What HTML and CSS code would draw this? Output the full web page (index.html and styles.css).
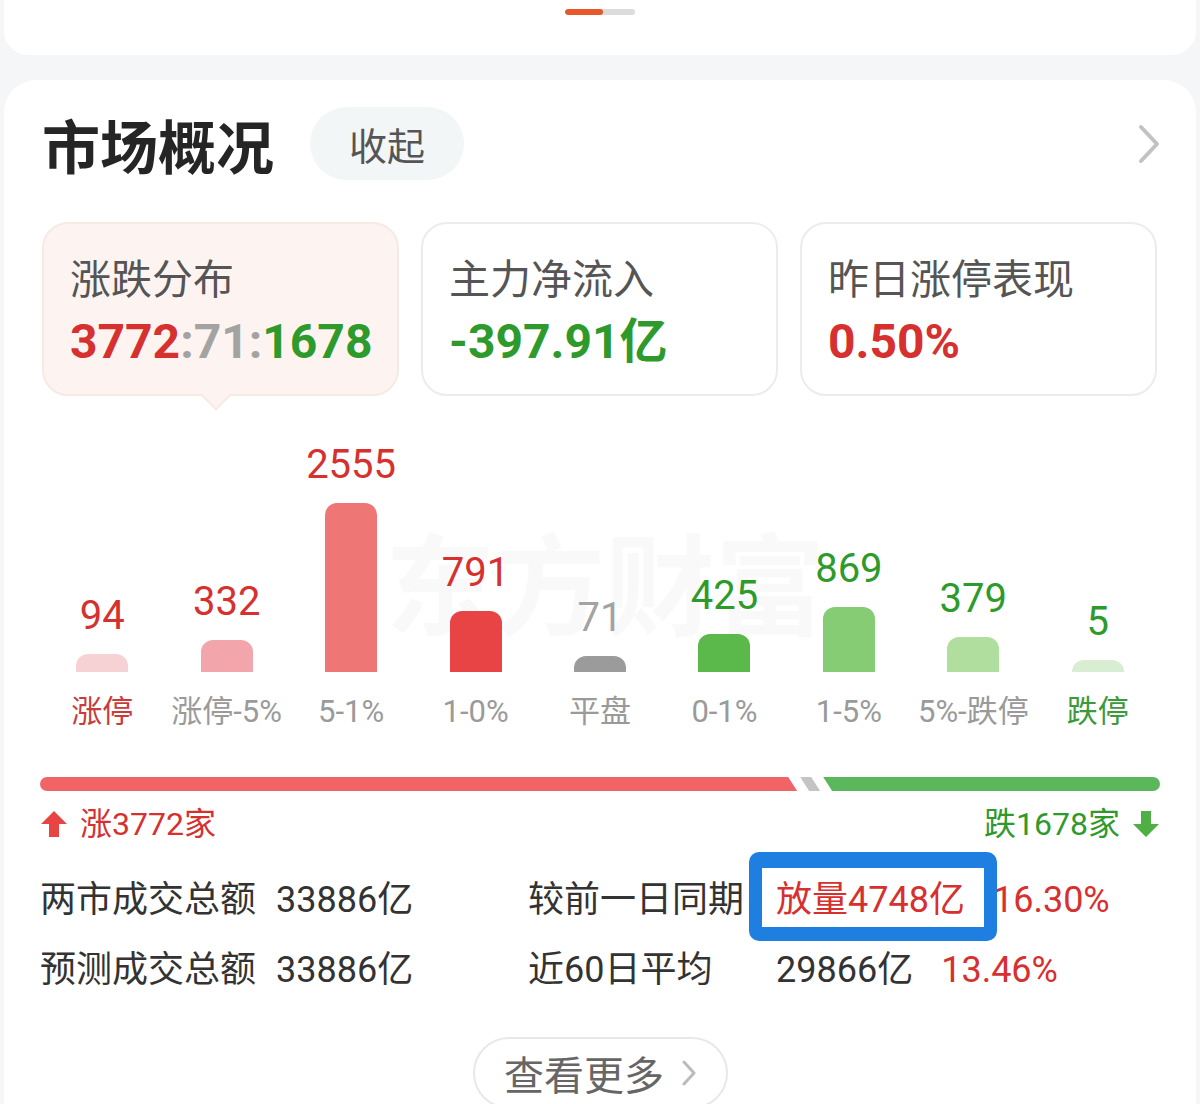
FILE: index.html
```html
<!DOCTYPE html>
<html lang="zh-CN">
<head>
  <meta charset="UTF-8" />
  <title>市场概况</title>
  <meta name="viewport" content="width=device-width, initial-scale=1.0" />
  <link rel="stylesheet" href="styles.css">
</head>
<body>

  <div class="top-card">
    <div class="pager"><span class="pager-on"></span></div>
  </div>

  <div class="panel">
    <div class="panel-head">
      <h1>市场概况</h1>
      <button class="fold">收起</button>
      <svg class="go" viewBox="0 0 22 40"><path d="M3 3 L19 20 L3 37"/></svg>
    </div>

    <div class="tabs">
      <div class="tab active">
        <div class="tab-name">涨跌分布</div>
        <div class="tab-value"><span class="up">3772</span><span class="flat">:71:</span><span class="down">1678</span></div>
      </div>
      <div class="tab">
        <div class="tab-name">主力净流入</div>
        <div class="tab-value down">-397.91亿</div>
      </div>
      <div class="tab">
        <div class="tab-name">昨日涨停表现</div>
        <div class="tab-value up">0.50%</div>
      </div>
    </div>

    <!-- 柱高 = 12 + 家数 * 0.0615 -->
    <div class="chart">
      <div class="watermark">东方财富</div>
      <div class="col"><span class="num up">94</span><div class="bar b1" style="height:18px"></div></div>
      <div class="col"><span class="num up">332</span><div class="bar b2" style="height:32px"></div></div>
      <div class="col"><span class="num up">2555</span><div class="bar b3" style="height:169px"></div></div>
      <div class="col"><span class="num up">791</span><div class="bar b4" style="height:61px"></div></div>
      <div class="col"><span class="num flat">71</span><div class="bar b5" style="height:16px"></div></div>
      <div class="col"><span class="num down">425</span><div class="bar b6" style="height:38px"></div></div>
      <div class="col"><span class="num down">869</span><div class="bar b7" style="height:65px"></div></div>
      <div class="col"><span class="num down">379</span><div class="bar b8" style="height:35px"></div></div>
      <div class="col"><span class="num down">5</span><div class="bar b9" style="height:12px"></div></div>
    </div>
    <div class="labels">
      <span class="up">涨停</span>
      <span>涨停-5%</span>
      <span>5-1%</span>
      <span>1-0%</span>
      <span>平盘</span>
      <span>0-1%</span>
      <span>1-5%</span>
      <span>5%-跌停</span>
      <span class="down">跌停</span>
    </div>

    <div class="ratio">
      <div class="seg seg-up" style="flex-grow:3772"></div>
      <div class="seg seg-flat" style="flex-grow:71"></div>
      <div class="seg seg-down" style="flex-grow:1678"></div>
    </div>
    <div class="counts">
      <div class="count up">
        <svg viewBox="0 0 28 28"><path d="M14 1 L27 14 H19 V27 H9 V14 H1 Z"/></svg>
        涨3772家
      </div>
      <div class="count down">
        跌1678家
        <svg viewBox="0 0 28 28"><path d="M14 27 L27 14 H19 V1 H9 V14 H1 Z"/></svg>
      </div>
    </div>

    <div class="stats">
      <span>两市成交总额</span>
      <span>33886亿</span>
      <span>较前一日同期</span>
      <span><span class="hl up">放量4748亿</span><span class="pct up">16.30%</span></span>

      <span>预测成交总额</span>
      <span>33886亿</span>
      <span>近60日平均</span>
      <span>29866亿<span class="pct up">13.46%</span></span>
    </div>

    <div class="more">
      查看更多
      <svg viewBox="0 0 14 26"><path d="M2 2 L12 13 L2 24"/></svg>
    </div>
  </div>

</body>
</html>
```

FILE: styles.css
```css
body {
  margin: 0;
  background: #f4f6f7;
  font-family: Roboto, "Noto Sans CJK SC", sans-serif;
  color: #333;
}

.up { color: #d6302f; }
.down { color: #2f9a2c; }
.flat { color: #a3a3a3; }

/* 上一张卡片的底部 */
.top-card {
  height: 55px;
  margin: 0 4px;
  padding-top: 9px;
  box-sizing: border-box;
  background: #fff;
  border-radius: 0 0 24px 24px;
  display: flex;
  justify-content: center;
}

.pager {
  width: 70px;
  height: 6px;
  border-radius: 3px;
  background: #dcdcdc;
  overflow: hidden;
}

.pager-on {
  display: block;
  width: 38px;
  height: 100%;
  border-radius: 3px;
  background: #e8572a;
}

.panel {
  margin: 25px 4px 0;
  padding: 27px 36px 40px;
  background: #fff;
  border-radius: 32px 32px 0 0;
}

.panel-head {
  display: flex;
  align-items: center;
  height: 73px;
  padding-left: 2px;
}

h1 {
  margin: 0;
  font-family: "Noto Sans CJK SC", sans-serif;
  font-size: 58px;
  font-weight: 700;
  line-height: 1;
  color: #252525;
}

.fold {
  margin-left: 36px;
  width: 154px;
  height: 73px;
  border: none;
  border-radius: 37px;
  background: #f3f6f7;
  font-family: "Noto Sans CJK SC", sans-serif;
  font-size: 38px;
  color: #555;
}

.go {
  margin-left: auto;
  width: 22px;
  height: 40px;
  fill: none;
  stroke: #c2c2c2;
  stroke-width: 4;
  stroke-linecap: round;
  stroke-linejoin: round;
}

/* 三个指标卡 */
.tabs {
  display: grid;
  grid-template-columns: repeat(3, 1fr);
  gap: 22px;
  margin-top: 42px;
  padding: 0 3px 0 2px;
}

.tab {
  position: relative;
  height: 174px;
  box-sizing: border-box;
  padding: 28px 0 0 26px;
  border: 2px solid #ececec;
  border-radius: 26px;
  background: #fff;
}

.tab.active {
  background: #fdf4f1;
  border-color: #f7e9e4;
}

.tab.active::after {
  content: "";
  position: absolute;
  left: 161px;
  bottom: -12px;
  width: 20px;
  height: 20px;
  background: #fdf4f1;
  border-right: 2px solid #f7e9e4;
  border-bottom: 2px solid #f7e9e4;
  transform: rotate(45deg);
}

.tab-name {
  font-family: "Noto Sans CJK SC", sans-serif;
  font-size: 41px;
  line-height: 48px;
  color: #555;
}

.tab-value {
  margin-top: 14px;
  font-size: 48px;
  font-weight: 700;
  line-height: 56px;
}

/* 涨跌分布柱状图 */
.chart {
  position: relative;
  z-index: 0;
  display: grid;
  grid-template-columns: repeat(9, 1fr);
  align-items: end;
  height: 260px;
  margin-top: 16px;
}

.watermark {
  position: absolute;
  z-index: -1;
  left: 345px;
  top: 112px;
  font-family: "Noto Sans CJK SC", sans-serif;
  font-size: 110px;
  font-weight: 700;
  line-height: 1;
  color: rgba(0, 0, 0, 0.022);
  white-space: nowrap;
}

.col {
  display: flex;
  flex-direction: column;
  align-items: center;
}

.num {
  font-size: 40px;
  line-height: 40px;
  margin-bottom: 18px;
}

.bar {
  width: 52px;
  border-radius: 12px 12px 0 0;
}

.b1 { background: #f7d2d4; }
.b2 { background: #f2a6ab; }
.b3 { background: #ee7775; }
.b4 { background: #e84446; }
.b5 { background: #9b9b9b; }
.b6 { background: #5bb84a; }
.b7 { background: #86cc74; }
.b8 { background: #afde9f; }
.b9 { background: #d8edd2; }

.labels {
  display: grid;
  grid-template-columns: repeat(9, 1fr);
  margin-top: 22px;
  font-size: 31px;
  line-height: 36px;
  text-align: center;
  color: #9a9a9a;
}

.labels .up { color: #c93c3c; }
.labels .down { color: #3d9a3a; }

/* 涨平跌比例条 */
.ratio {
  display: flex;
  gap: 3px;
  height: 14px;
  margin-top: 47px;
}

.seg {
  flex-basis: 0;
}

.seg-up {
  background: #f06468;
  border-radius: 7px 0 0 7px;
  clip-path: polygon(0 0, calc(100% - 9px) 0, 100% 100%, 0 100%);
}

.seg-flat {
  min-width: 20px;
  background: #c4c4c4;
  clip-path: polygon(0 0, calc(100% - 9px) 0, 100% 100%, 9px 100%);
}

.seg-down {
  background: #5bb75a;
  border-radius: 0 7px 7px 0;
  clip-path: polygon(0 0, 100% 0, 100% 100%, 9px 100%);
}

.counts {
  display: flex;
  justify-content: space-between;
  margin-top: 13px;
  font-size: 32px;
  line-height: 40px;
}

.count {
  display: flex;
  align-items: center;
  gap: 12px;
}

.count svg {
  width: 28px;
  height: 28px;
}

.count.up svg { fill: #e84444; }
.count.down svg { fill: #4fae44; }

/* 成交额 */
.stats {
  display: grid;
  grid-template-columns: 236px 252px 248px auto;
  margin-top: 21px;
  font-size: 36px;
  line-height: 70px;
  color: #333;
}

.hl {
  position: relative;
  display: inline-block;
}

.hl::after {
  content: "";
  position: absolute;
  left: -27px;
  right: -32px;
  top: -13px;
  bottom: -6px;
  border: 14px solid #1f7fe0;
  border-width: 16px 13px 14px 13px;
  border-radius: 10px;
}

.pct {
  margin-left: 28px;
}

.more {
  display: flex;
  align-items: center;
  justify-content: center;
  gap: 18px;
  width: 255px;
  height: 72px;
  box-sizing: border-box;
  margin: 32px auto 0;
  border: 2px solid #e8e8e8;
  border-radius: 38px;
  font-family: "Noto Sans CJK SC", sans-serif;
  font-size: 40px;
  color: #666;
}

.more svg {
  width: 14px;
  height: 26px;
  fill: none;
  stroke: #bbb;
  stroke-width: 3;
  stroke-linecap: round;
  stroke-linejoin: round;
}
```
